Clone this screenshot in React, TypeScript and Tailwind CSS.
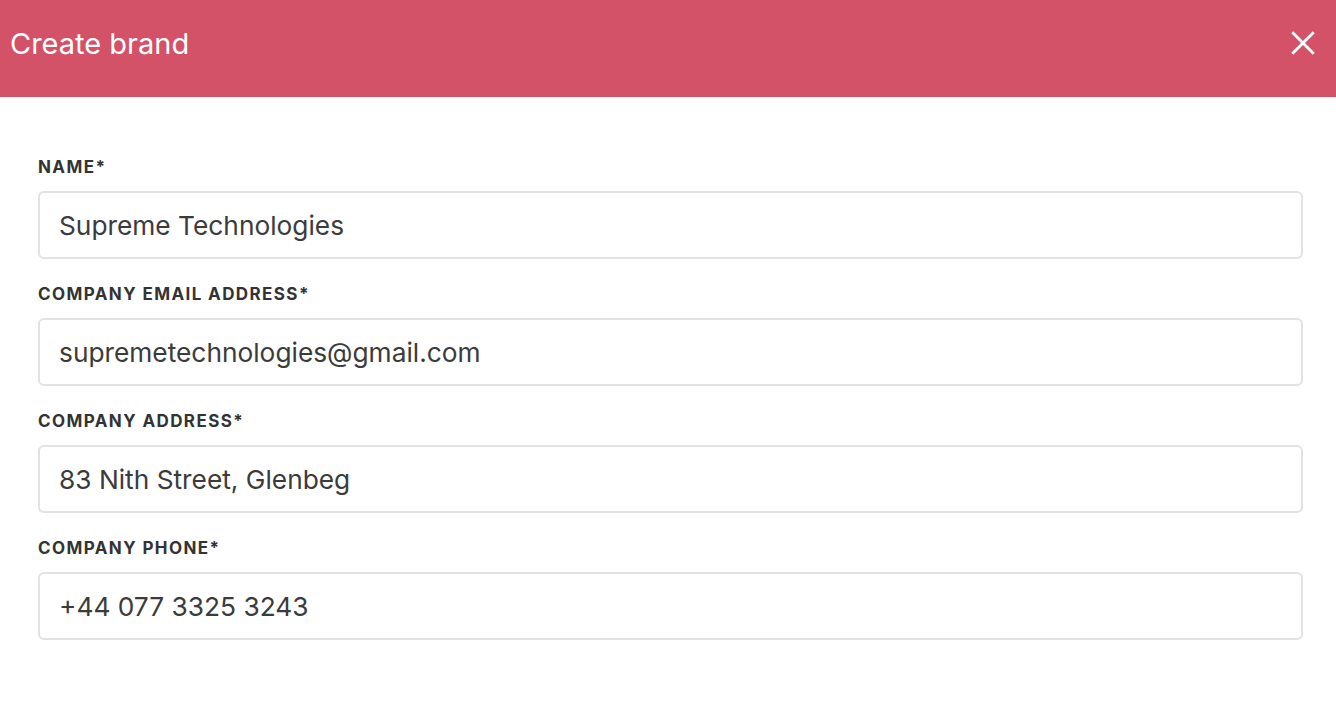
import React from "react";

const fields = [
  { label: "NAME*", value: "Supreme Technologies" },
  { label: "COMPANY EMAIL ADDRESS*", value: "supremetechnologies@gmail.com" },
  { label: "COMPANY ADDRESS*", value: "83 Nith Street, Glenbeg" },
  { label: "COMPANY PHONE*", value: "+44 077 3325 3243" },
];

export default function App() {
  return (
    <div className="w-[1336px] h-[714px] bg-white" style={{ fontFamily: "Inter, 'Noto Sans', sans-serif" }}>
      <div className="h-[97px] bg-[#d35268] flex items-center justify-between pl-[10px] pr-[20px]">
        <h1 className="text-white text-[29px] font-normal leading-none -mt-[10px]">Create brand</h1>
        <svg width="26" height="26" viewBox="0 0 24 24" className="-mt-[11px]" fill="none" stroke="white" strokeWidth="2.6" strokeLinecap="square">
          <path d="M3 3 L21 21 M21 3 L3 21" />
        </svg>
      </div>
      <div className="pl-[38px] pr-[33px] pt-[60px] w-full">
        {fields.map((f) => (
          <div key={f.label} className="mb-[25px]">
            <div className="text-[17px] leading-[20px] font-bold text-[#333] tracking-[1.4px] mb-[14px]">{f.label}</div>
            <div className="h-[68px] border-2 border-[#e2e2e2] rounded-[6px] flex items-center px-[19px] pt-[2px]">
              <span className="text-[26.3px] text-[#3b3b3b]">{f.value}</span>
            </div>
          </div>
        ))}
      </div>
    </div>
  );
}
